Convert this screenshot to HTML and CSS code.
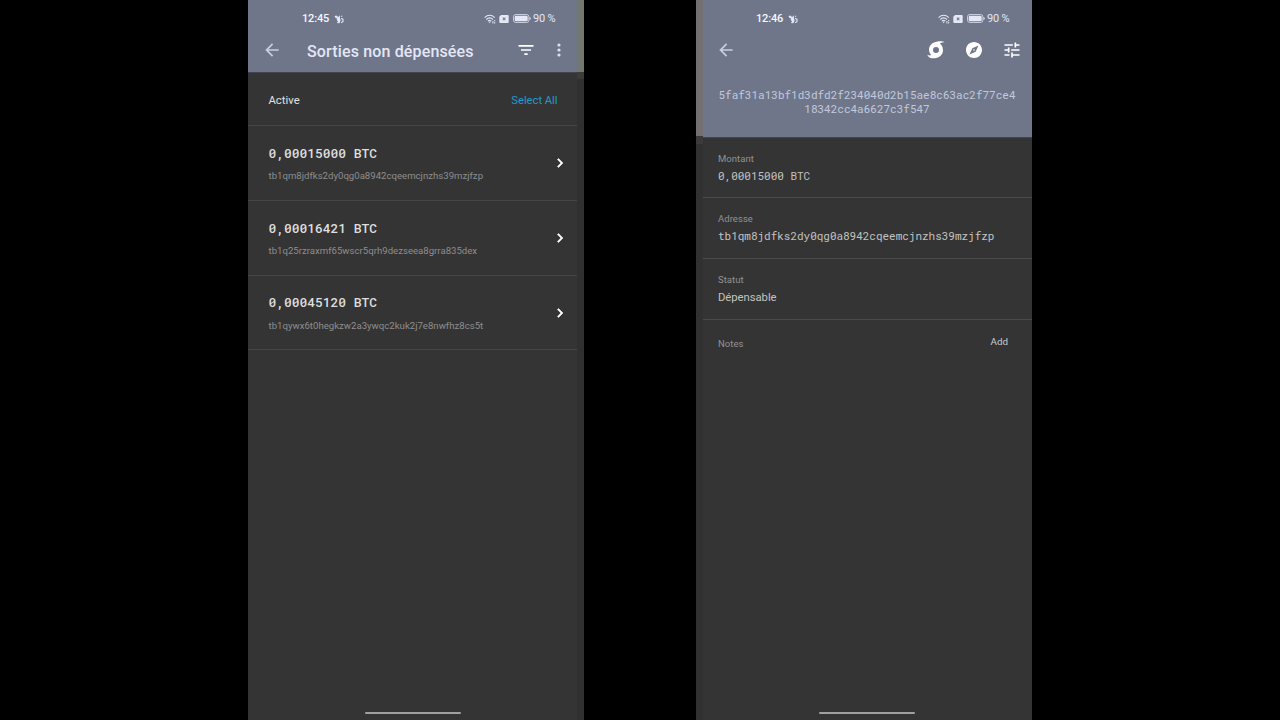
FILE: index.html
```html
<!DOCTYPE html>
<html lang="fr">
<head>
<meta charset="utf-8">
<title>Sorties non dépensées</title>
<link rel="stylesheet" href="styles.css">
</head>
<body>
<svg class="defs" aria-hidden="true">
  <symbol id="back" viewBox="0 0 24 24"><path d="M20 11H7.83l5.59-5.59L12 4l-8 8 8 8 1.41-1.41L7.83 13H20v-2z"/></symbol>
  <symbol id="chevron" viewBox="0 0 24 24"><path d="M10 6 8.59 7.41 13.17 12l-4.58 4.59L10 18l6-6z"/></symbol>
  <symbol id="bird" viewBox="0 0 10 10"><path d="M.5 2.200 2 1.600 3.200 1.900 4 3.200 5.800 1.300 6 4.600 6.600 6.400 5.400 9.200 2.800 9 4 7.400 2.800 6 2.900 4.200 1.600 4z"/><path d="M7 2.300H8.300M7 4.500 9 5.200V7.400L7.200 8.800" fill="none" stroke="currentColor" stroke-width="1.100"/></symbol>
  <symbol id="signal" viewBox="0 0 12 10"><g fill="none" stroke="currentColor" stroke-width="1.1"><path d="M.6 3.6Q5.6-1 10.8 3.6M2.3 5.5Q5.6 2.4 9 5.5M3.9 7.2Q5.6 5.6 7.3 7.2"/></g><path d="m4.5 7.8 1.1 1.5 1.1-1.5zM8.4 7h1v2.4h-1zM10.2 6h1v1.2h-1zM10.2 8h1v1.4h-1z"/></symbol>
  <symbol id="sim" viewBox="0 0 10 8"><path fill-rule="evenodd" d="M2 0H8.8Q9.7 0 9.7.9V7Q9.7 7.9 8.8 7.9H1.2Q.3 7.9.3 7V1.700zM3.500 2.900 4.400 3.900 3.500 4.900 4.200 5.600 5.100 4.600 6 5.600 6.700 4.900 5.800 3.900 6.700 2.900 6 2.200 5.100 3.200 4.200 2.200z"/></symbol>
  <symbol id="battery" viewBox="0 0 18 9"><rect x=".5" y=".5" width="15.4" height="8" rx="2.3" fill="none" stroke="currentColor" stroke-opacity=".75"/><rect x="1.7" y="1.7" width="13" height="5.6" rx="1.2"/><path d="M16.5 3Q17.7 3.2 17.7 4.5 17.7 5.8 16.5 6z"/></symbol>
</svg>
<main class="stage">
  <section class="phone phone-list">
    <header class="header">
      <div class="status">
        <span class="clock">12:45</span><svg class="bird"><use href="#bird"/></svg>
        <span class="indicators"><svg class="signal"><use href="#signal"/></svg><svg class="sim"><use href="#sim"/></svg><svg class="battery"><use href="#battery"/></svg><span class="percent">90 %</span></span>
      </div>
      <nav class="toolbar">
        <svg class="back"><use href="#back"/></svg>
        <h1 class="title">Sorties non dépensées</h1>
        <svg class="filter" viewBox="0 0 24 24"><path d="M10 18h4v-2h-4v2zM3 6v2h18V6H3zm3 7h12v-2H6v2z"/></svg>
        <svg class="more" viewBox="0 0 4 14"><circle cx="2" cy="2" r="1.6"/><circle cx="2" cy="7" r="1.6"/><circle cx="2" cy="12" r="1.6"/></svg>
      </nav>
    </header>
    <div class="section-row"><span>Active</span><span class="select-all">Select All</span></div>
    <article class="utxo">
      <div><p class="amount mono">0,00015000 BTC</p><p class="utxo-address">tb1qm8jdfks2dy0qg0a8942cqeemcjnzhs39mzjfzp</p></div>
      <svg class="chevron"><use href="#chevron"/></svg>
    </article>
    <article class="utxo">
      <div><p class="amount mono">0,00016421 BTC</p><p class="utxo-address">tb1q25rzraxmf65wscr5qrh9dezseea8grra835dex</p></div>
      <svg class="chevron"><use href="#chevron"/></svg>
    </article>
    <article class="utxo">
      <div><p class="amount mono">0,00045120 BTC</p><p class="utxo-address">tb1qywx6t0hegkzw2a3ywqc2kuk2j7e8nwfhz8cs5t</p></div>
      <svg class="chevron"><use href="#chevron"/></svg>
    </article>
    <div class="home-bar"></div>
  </section>

  <section class="phone phone-detail">
    <header class="header header-tall">
      <div class="status">
        <span class="clock">12:46</span><svg class="bird"><use href="#bird"/></svg>
        <span class="indicators"><svg class="signal"><use href="#signal"/></svg><svg class="sim"><use href="#sim"/></svg><svg class="battery"><use href="#battery"/></svg><span class="percent">90 %</span></span>
      </div>
      <nav class="toolbar">
        <svg class="back"><use href="#back"/></svg>
        <span class="actions">
          <svg class="action" viewBox="0 0 18 18"><path fill-rule="evenodd" d="M17.600 1.200C16.200.300 13.400 0 10.600.400 5.400 1.100 2 4.400 2 8.800c0 2.200.900 4 2.300 5.300-1.300.500-2.700.300-4-.400.800 2.500 3.600 3.900 7.100 3.600C12.600 16.900 16 13.500 16 9c0-2.900-1.200-5.200-3.200-6.600 1.500-.900 3.200-1.200 4.800-1.200zM9 6a3 3 0 1 1 0 6 3 3 0 0 1 0-6z"/></svg>
          <svg class="action" viewBox="0 0 24 24"><path d="M12 10.9c-.61 0-1.1.49-1.1 1.1s.49 1.1 1.1 1.1 1.1-.49 1.1-1.1-.49-1.1-1.1-1.1zM12 1.300C6.100 1.300 1.300 6.100 1.300 12S6.100 22.700 12 22.700 22.700 17.900 22.700 12 17.900 1.300 12 1.300zm2.190 12.890L6 18l3.810-8.190L18 6l-3.810 8.190z"/></svg>
          <svg class="action tune" viewBox="0 0 24 24"><path d="M3 17v2h6v-2H3zM3 5v2h10V5H3zm10 16v-2h8v-2h-8v-2h-2v6h2zM7 9v2H3v2h4v2h2V9H7zm14 4v-2H11v2h10zm-6-4h2V7h4V5h-4V3h-2v6z"/></svg>
        </span>
      </nav>
      <p class="hash mono">5faf31a13bf1d3dfd2f234040d2b15ae8c63ac2f77ce4<br>18342cc4a6627c3f547</p>
    </header>
    <div class="field first"><span class="label">Montant</span><span class="value mono">0,00015000 BTC</span></div>
    <div class="field"><span class="label">Adresse</span><span class="value mono">tb1qm8jdfks2dy0qg0a8942cqeemcjnzhs39mzjfzp</span></div>
    <div class="field"><span class="label">Statut</span><span class="value">Dépensable</span></div>
    <div class="notes"><span class="label">Notes</span><span class="add">Add</span></div>
    <div class="home-bar"></div>
  </section>
</main>
</body>
</html>
```
FILE: styles.css
```css
* { box-sizing: border-box; }
body { margin: 0; background: #000; font-family: Roboto, sans-serif; color: #e2e2e2; }
p, h1 { margin: 0; }
svg { display: block; flex: none; fill: currentColor; }
.defs { position: absolute; width: 0; height: 0; }
.mono { font-family: "Roboto Mono", "DejaVu Sans Mono", monospace; }

.stage { display: flex; justify-content: center; gap: 112px; height: 720px; overflow: hidden; }
.phone { display: flex; flex-direction: column; width: 336px; height: 720px; }
.phone-list {
  padding-right: 7px;
  background: linear-gradient(#74776f 72px, #3b3b3b 72px, #3b3b3b 79px, #303030 79px) right / 7px 100% no-repeat, #343434;
}
.phone-detail {
  padding-left: 7px;
  background: linear-gradient(#746f70 136px, #3b3b3b 136px, #3b3b3b 144px, #313131 144px) left / 7px 100% no-repeat, #343434;
}

.header { flex: none; height: 73px; background: #6f768a; border-bottom: 1px solid #404350; color: #e4e7f5; }
.header-tall { height: 138px; }
.status { display: flex; align-items: center; height: 30px; padding: 8px 22px 0 54px; font-size: 11px; line-height: 14px; }
.phone-detail .status { padding-left: 53px; padding-right: 23px; }
.clock { width: 27px; font-weight: 500; letter-spacing: -0.15px; color: #f4f6ff; }
.bird { width: 10px; height: 10px; margin-left: 5px; }
.indicators { display: flex; align-items: center; margin-left: auto; }
.signal { width: 12px; height: 10px; margin: -1px 3px 0 0; }
.sim { width: 10px; height: 8px; margin: -1px 4px 0 0; }
.battery { width: 18px; height: 9px; margin: -1px 2px 0 0; }
.percent { width: 22px; white-space: nowrap; letter-spacing: -0.2px; }

.toolbar { display: flex; align-items: center; height: 42px; padding: 0 16px 0 14px; }
.back { width: 20px; height: 20px; margin-top: -2px; color: #c9cde1; }
.title { width: 168px; margin-left: 25px; padding-top: 1px; font-size: 16px; line-height: 21px; font-weight: 500; letter-spacing: 0.15px; white-space: nowrap; }
.filter { width: 20px; height: 20px; margin: -2px 0 0 auto; color: #fff; }
.more { width: 4px; height: 14px; margin: -2px 0 0 21px; color: #dfe2ee; }
.phone-detail .toolbar { padding: 0 11.500px 0 13px; }
.actions { display: flex; gap: 20px; margin: -2px 0 0 auto; color: #fff; }
.action { width: 18px; height: 18px; }
.tune { width: 20px; height: 20px; margin: -1px; }
.hash { margin-top: 16px; padding-right: 1px; font-size: 11px; line-height: 14.4px; text-align: center; color: #c3c9dc; }

.section-row { display: flex; justify-content: space-between; align-items: center; height: 53px; padding: 2px 19.5px 0 20.5px; border-bottom: 1px solid #454545; font-size: 11.3px; }
.select-all { color: #2299cc; letter-spacing: -0.05px; }
.utxo { display: flex; justify-content: space-between; align-items: center; height: 75px; padding: 0 8px 0 20.5px; border-bottom: 1px solid #454545; }
.utxo:nth-of-type(3) { height: 74px; }
.amount { font-size: 13px; line-height: 18px; letter-spacing: -0.06px; font-weight: 500; color: #dedede; }
.utxo-address { margin-top: 7px; font-size: 9.62px; line-height: 14px; color: #8e8e8e; white-space: nowrap; }
.utxo:nth-of-type(3) .utxo-address { margin-top: 8px; }
.chevron { width: 18px; height: 18px; color: #fff; stroke: #fff; stroke-width: 0.7px; }

.field { display: flex; flex-direction: column; height: 61px; padding: 14px 15px 0; border-bottom: 1px solid #4a4a4a; }
.first { height: 60px; }
.label { font-size: 9.5px; line-height: 13px; color: #929292; letter-spacing: 0.05px; }
.value { margin-top: 3px; font-size: 11.3px; line-height: 17px; letter-spacing: -0.05px; color: #c2c2c2; }
.value.mono { margin-top: 2px; font-size: 11px; letter-spacing: -0.02px; }
.notes { display: flex; justify-content: space-between; padding: 17px 24px 0 15px; }
.add { font-size: 9.8px; line-height: 10px; color: #cbcbcb; }
.home-bar { flex: none; width: 96px; height: 2px; margin: auto auto 6px 117px; background: #a0a0a0; border-radius: 1px; }
.phone-detail .home-bar { margin-left: 116px; }
```
